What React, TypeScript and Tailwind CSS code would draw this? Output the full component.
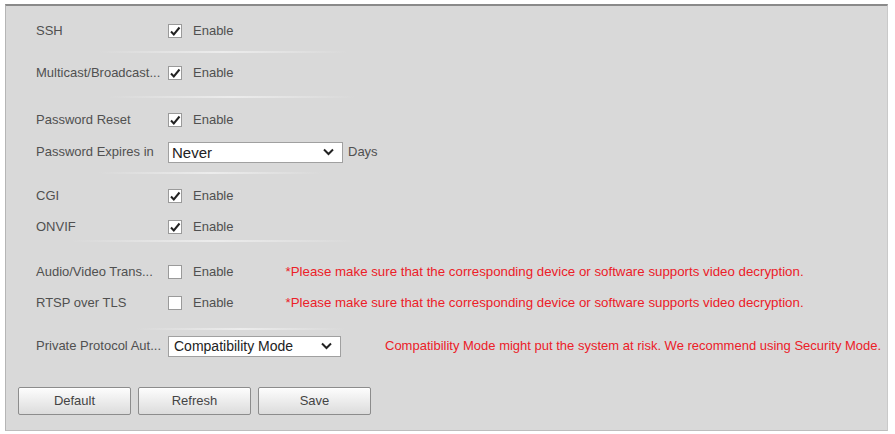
import { ReactNode } from "react";

const font = "font-['Liberation_Sans',Arial,sans-serif]";

function Checkbox({ checked }: { checked?: boolean }) {
  return (
    <span className="flex h-[14px] w-[14px] items-center justify-center border border-[#9a9a9a] bg-white">
      {checked && (
        <svg width="12" height="12" viewBox="0 0 12 12">
          <path d="M2 6.5 L4.8 9.5 L10.5 2.5" fill="none" stroke="#222" strokeWidth="2" />
        </svg>
      )}
    </span>
  );
}

function Chevron() {
  return (
    <svg width="11" height="8" viewBox="0 0 11 8" className="ml-auto mr-[8px]">
      <path d="M1 1.5 L5.5 6 L10 1.5" fill="none" stroke="#222" strokeWidth="2" />
    </svg>
  );
}

function Row({ label, children, className = "" }: { label: string; children: ReactNode; className?: string }) {
  return (
    <div className={`flex h-[24px] items-center ${className}`}>
      <span className="w-[132px] shrink-0 whitespace-nowrap text-[13px] text-[#505050]">{label}</span>
      {children}
    </div>
  );
}

function EnableBox({ checked, note }: { checked?: boolean; note?: string }) {
  return (
    <>
      <Checkbox checked={checked} />
      <span className="ml-[11px] text-[13px] text-[#505050]">Enable</span>
      {note && <span className="ml-[52px] whitespace-nowrap text-[13.3px] text-[#ec2028]">{note}</span>}
    </>
  );
}

function Sep({ left, width, className = "" }: { left: string; width: string; className?: string }) {
  return (
    <div className={`h-[2px] bg-gradient-to-r from-transparent via-[#ececec] to-transparent ${left} ${width} ${className}`} />
  );
}

function Btn({ children }: { children: ReactNode }) {
  return (
    <button className="h-[28px] w-[113px] rounded-[2px] border border-[#8c8c8c] bg-gradient-to-b from-[#fdfdfd] to-[#dcdcdc] text-[13px] text-[#444] shadow-[inset_0_1px_0_#fff]">
      {children}
    </button>
  );
}

const note = "*Please make sure that the corresponding device or software supports video decryption.";

export default function App() {
  return (
    <div className={`h-[434px] w-[895px] bg-white pl-[5px] pt-[4px] ${font}`}>
      <div className="h-[427px] w-[883px] border-t-2 border-l border-r border-b border-t-[#8a8a8a] border-l-[#b5b5b5] border-r-[#c9c9c9] border-b-[#bdbdbd] bg-[#d9d9d9] pl-[30px]">
        <Row label="SSH" className="mt-[13px]">
          <EnableBox checked />
        </Row>
        <Sep left="ml-[62px]" width="w-[250px]" className="mt-[8px]" />
        <Row label="Multicast/Broadcast..." className="mt-[8px]">
          <EnableBox checked />
        </Row>
        <Sep left="ml-[72px]" width="w-[248px]" className="mt-[11px]" />
        <Row label="Password Reset" className="mt-[10px]">
          <EnableBox checked />
        </Row>
        <Row label="Password Expires in" className="mt-[8px]">
          <div className="flex h-[21px] w-[175px] items-center border border-[#a0a0a0] bg-white pl-[3px]">
            <span className="text-[15px] leading-none text-[#222]">Never</span>
            <Chevron />
          </div>
          <span className="ml-[5px] text-[13px] text-[#505050]">Days</span>
        </Row>
        <Sep left="ml-[62px]" width="w-[225px]" className="mt-[8px]" />
        <Row label="CGI" className="mt-[10px]">
          <EnableBox checked />
        </Row>
        <Row label="ONVIF" className="mt-[7px]">
          <EnableBox checked />
        </Row>
        <Sep left="ml-[35px]" width="w-[285px]" className="mt-[1px]" />
        <Row label="Audio/Video Trans..." className="mt-[18px]">
          <EnableBox note={note} />
        </Row>
        <Row label="RTSP over TLS" className="mt-[7px]">
          <EnableBox note={note} />
        </Row>
        <Sep left="ml-[100px]" width="w-[210px]" className="mt-[13px]" />
        <Row label="Private Protocol Aut..." className="mt-[4px]">
          <div className="flex h-[21px] w-[173px] items-center border border-[#a0a0a0] bg-white pl-[5px]">
            <span className="text-[14px] leading-none text-[#222]">Compatibility Mode</span>
            <Chevron />
          </div>
          <span className="ml-[44px] whitespace-nowrap text-[13px] text-[#ec2028]">
            Compatibility Mode might put the system at risk. We recommend using Security Mode.
          </span>
        </Row>
        <div className="-ml-[18px] mt-[29px] flex gap-[7px]">
          <Btn>Default</Btn>
          <Btn>Refresh</Btn>
          <Btn>Save</Btn>
        </div>
      </div>
    </div>
  );
}
